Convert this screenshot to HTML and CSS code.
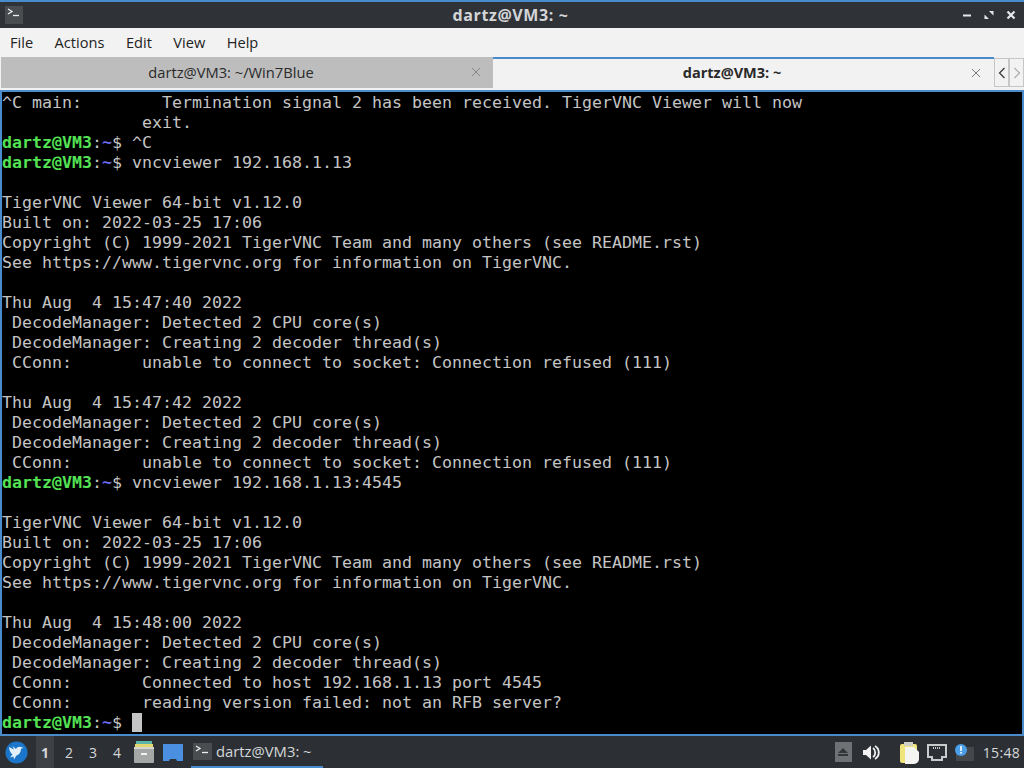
FILE: index.html
```html
<!DOCTYPE html>
<html lang="en">
<head>
<meta charset="utf-8">
<title>dartz@VM3: ~</title>
<link rel="stylesheet" href="styles.css">
</head>
<body>
<div class="window">
  <header class="titlebar">
    <span class="app-icon"><svg width="18" height="18" viewBox="0 0 18 18"><rect width="18" height="18" fill="#4a4d50"/><path d="M3 3l4 2.500-4 2.500" fill="none" stroke="#eee" stroke-width="1.300"/><path d="M8 9.500h6" stroke="#eee" stroke-width="1.300"/></svg></span>
    <span class="title">dartz@VM3: ~</span>
    <span class="win-controls">
      <svg width="10" height="10" viewBox="0 0 10 10"><path d="M1 5.500h8" stroke="#e6e8ea" stroke-width="2"/></svg>
      <svg width="10" height="10" viewBox="0 0 10 10"><path d="M5 1h4.500v4.500zM5 9H.5V4.500z" fill="#e6e8ea"/></svg>
      <svg width="10" height="10" viewBox="0 0 10 10"><path d="M1.500 1.500l7 7M8.500 1.500l-7 7" stroke="#e6e8ea" stroke-width="2.200"/></svg>
    </span>
  </header>
  <nav class="menubar">
    <span>File</span><span>Actions</span><span>Edit</span><span>View</span><span>Help</span>
  </nav>
  <div class="tabbar">
    <div class="tab inactive"><span class="tab-label">dartz@VM3: ~/Win7Blue</span><svg class="tab-close" width="10" height="10" viewBox="0 0 10 10"><path d="M1 1l8 8M9 1l-8 8" stroke="#85878a" stroke-width="1"/></svg></div>
    <div class="tab active"><span class="tab-label">dartz@VM3: ~</span><svg class="tab-close" width="10" height="10" viewBox="0 0 10 10"><path d="M1 1l8 8M9 1l-8 8" stroke="#77797c" stroke-width="1"/></svg></div>
    <div class="tab-scroll">
      <span class="scroll-btn"><svg width="8" height="12" viewBox="0 0 8 12"><path d="M6.500 1L1.500 6l5 5" fill="none" stroke="#333" stroke-width="1.200"/></svg></span>
      <span class="scroll-btn"><svg width="8" height="12" viewBox="0 0 8 12"><path d="M1.500 1l5 5-5 5" fill="none" stroke="#aaa" stroke-width="1.200"/></svg></span>
    </div>
  </div>
  <pre class="terminal">^C main:        Termination signal 2 has been received. TigerVNC Viewer will now
              exit.
<span class="u">dartz@VM3</span>:<span class="p">~</span>$ ^C
<span class="u">dartz@VM3</span>:<span class="p">~</span>$ vncviewer 192.168.1.13

TigerVNC Viewer 64-bit v1.12.0
Built on: 2022-03-25 17:06
Copyright (C) 1999-2021 TigerVNC Team and many others (see README.rst)
See https://www.tigervnc.org for information on TigerVNC.

Thu Aug  4 15:47:40 2022
 DecodeManager: Detected 2 CPU core(s)
 DecodeManager: Creating 2 decoder thread(s)
 CConn:       unable to connect to socket: Connection refused (111)

Thu Aug  4 15:47:42 2022
 DecodeManager: Detected 2 CPU core(s)
 DecodeManager: Creating 2 decoder thread(s)
 CConn:       unable to connect to socket: Connection refused (111)
<span class="u">dartz@VM3</span>:<span class="p">~</span>$ vncviewer 192.168.1.13:4545

TigerVNC Viewer 64-bit v1.12.0
Built on: 2022-03-25 17:06
Copyright (C) 1999-2021 TigerVNC Team and many others (see README.rst)
See https://www.tigervnc.org for information on TigerVNC.

Thu Aug  4 15:48:00 2022
 DecodeManager: Detected 2 CPU core(s)
 DecodeManager: Creating 2 decoder thread(s)
 CConn:       Connected to host 192.168.1.13 port 4545
 CConn:       reading version failed: not an RFB server?
<span class="u">dartz@VM3</span>:<span class="p">~</span>$ <span class="cursor"> </span></pre>
</div>
<footer class="panel">
  <span class="start"><svg width="23" height="23" viewBox="0 0 23 23"><circle cx="11.500" cy="11.500" r="11" fill="#1b76c9"/><path d="M4 6l5 2.500L7.500 5l3.500 3c.8-1.600 2.400-2.400 4-2.200l3.500 1-2.500 1c0 3.500-1.800 6-4.800 7l-2.200 3.800-.5-3.200-3.500 1 2.500-3C5.800 12.500 4.300 9.500 4 6z" fill="#e3eff9"/></svg></span>
  <div class="pager"><span class="current">1</span><span>2</span><span>3</span><span>4</span></div>
  <span class="launcher first"><svg width="22" height="24" viewBox="0 0 22 24"><rect x="3" y="1" width="16" height="4" fill="#5bb5a8"/><rect x="2" y="4" width="18" height="4" fill="#e6d76f"/><rect x="1" y="7" width="20" height="16" rx="1" fill="#a5a7a6"/><rect x="1" y="7" width="20" height="2" fill="#d8d8d2"/><rect x="8" y="13" width="6" height="2" fill="#f2f2f2"/></svg></span>
  <span class="launcher"><svg width="20" height="17" viewBox="0 0 20 17"><path d="M0 0h20v17h-6l-1-2H7l-1 2H0z" fill="#4a8fe0"/></svg></span>
  <div class="task"><svg width="19" height="17" viewBox="0 0 19 17"><rect width="19" height="17" fill="#4a4d50"/><path d="M3 3l4 2.500-4 2.500" fill="none" stroke="#eee" stroke-width="1.300"/><path d="M9 9.500h6" stroke="#eee" stroke-width="1.300"/></svg><span>dartz@VM3: ~</span></div>
  <div class="tray">
    <span class="eject"><svg width="10" height="8" viewBox="0 0 10 8"><path d="M5 0l5 5H0z" fill="#333639"/><rect y="6" width="10" height="2" fill="#333639"/></svg></span>
    <svg class="tray-sound" width="17" height="15" viewBox="0 0 17 15"><path d="M0 5h3l5-4.500v14L3 10H0z" fill="#f2f2f2"/><path d="M10 3c3 2 3 7 0 9M12 1c5 3 5 10 0 13" fill="none" stroke="#f2f2f2" stroke-width="1.800"/></svg>
    <svg class="tray-clip" width="21" height="23" viewBox="0 0 21 23"><rect x="1" y="3" width="17" height="19" rx="2" fill="#f0e57a"/><rect x="5" y="1" width="9" height="4" fill="#cfd0c8"/><path d="M6 6h9l5 5v7c0 3-3 5-5 5H6z" fill="#f4f4f2"/></svg>
    <svg class="tray-net" width="20" height="17" viewBox="0 0 20 17"><path d="M1 1h18v12h-4v3H5v-3H1z" fill="#2c2f33" stroke="#c8cacb" stroke-width="2"/><path d="M6 4h8" stroke="#c8cacb" stroke-dasharray="1 1" stroke-width="2"/></svg>
    <svg class="tray-update" width="20" height="18" viewBox="0 0 20 18"><rect x="2" y="4" width="18" height="14" fill="#45484b"/><circle cx="7" cy="7" r="6" fill="#4b9fe8"/><rect x="6.200" y="3" width="1.600" height="5" fill="#fff"/><rect x="6.200" y="9" width="1.600" height="1.600" fill="#fff"/></svg>
    <span class="clock">15:48</span>
  </div>
</footer>
</body>
</html>
```

FILE: styles.css
```css
* { box-sizing: border-box; }
html, body { margin: 0; padding: 0; }
body {
  width: 1024px;
  height: 768px;
  overflow: hidden;
  display: flex;
  flex-direction: column;
  background: #2c3035;
  font-family: "Open Sans", "Noto Sans", sans-serif;
}
.window { height: 736px; display: flex; flex-direction: column; }
.titlebar {
  height: 28px;
  flex: none;
  background: #2f3338;
  border-top: 2px solid #4a8ccb;
  display: flex;
  align-items: center;
  padding: 0 8px 0 5px;
}
.app-icon { display: flex; flex: 1; }
.title {
  text-align: center;
  color: #d4d6d8;
  font-size: 16px;
  font-weight: 700;
  letter-spacing: .6px;
}
.win-controls { display: flex; flex: 1; justify-content: flex-end; gap: 12px; align-items: center; }
.menubar {
  height: 29px;
  flex: none;
  background: #f2f2f2;
  display: flex;
  gap: 21.5px;
  align-items: center;
  padding: 0 0 1px 10px;
  color: #222;
  font-size: 14.6px;
}
.tabbar {
  height: 33px;
  flex: none;
  background: #f2f2f2;
  display: flex;
}
.tab {
  display: flex;
  align-items: center;
  font-size: 14.7px;
  color: #2a2a2a;
}
.tab-label { flex: 1; text-align: center; }
.tab.inactive {
  width: 492px;
  margin: 0 0 2px 1px;
  background: #bdbdbd;
  padding: 0 12px 2px 0;
}
.tab.inactive .tab-label { padding-right: 10px; }
.tab.active {
  width: 501px;
  background: #f2f2f2;
  border-top: 2px solid #4a8ccb;
  font-weight: 700;
  font-size: 14.5px;
  padding: 0 13px 4px 0;
}
.tab-scroll { display: flex; flex: 1; align-items: flex-start; padding-top: 1px; }
.scroll-btn {
  width: 15px;
  height: 29px;
  border: 1px solid #c6c6c6;
  display: flex;
  align-items: center;
  justify-content: center;
  flex: none;
}
.terminal {
  flex: 1;
  margin: 0;
  background: #000;
  border: 2px solid #4a8ccb;
  padding: 1px 0 0;
  color: #c4c4c4;
  font-family: "DejaVu Sans Mono", monospace;
  font-size: 16.62px;
  line-height: 20px;
  overflow: hidden;
  white-space: pre;
}
.u { color: #54e354; font-weight: 700; }
.p { color: #6a6ae8; font-weight: 700; }
.cursor { background: #c4c4c4; }
.panel {
  height: 32px;
  flex: none;
  background: #2c3035;
  display: flex;
  align-items: center;
  color: #d5d7d9;
  font-size: 14.8px;
}
.start { display: flex; margin-left: 5px; width: 30px; }
.pager { display: flex; width: 96px; margin-left: -2px; }
.pager span { width: 24px; height: 32px; display: flex; align-items: center; justify-content: center; font-size: 14px; }
.pager .current { background: #3d4146; font-weight: 700; margin-left: 3px; width: 18px; margin-right: 3px; }
.launcher { width: 28px; display: flex; justify-content: center; }
.launcher.first { margin-left: 1px; margin-right: 1px; }
.task {
  width: 132px;
  height: 32px;
  margin-left: 4px;
  display: flex;
  align-items: center;
  gap: 4px;
  padding-left: 2px;
  border-bottom: 2px solid #4a8ccb;
}
.tray { margin-left: auto; display: flex; align-items: center; padding-right: 4px; }
.eject {
  width: 17px; height: 20px; background: #6f7275;
  display: flex; align-items: center; justify-content: center;
}
.tray-sound { margin-left: 11px; }
.tray-clip { margin-left: 19px; }
.tray-net { margin-left: 7px; }
.tray-update { margin-left: 7px; }
.clock { margin-left: 9px; font-size: 14px; letter-spacing: .3px; }
```
